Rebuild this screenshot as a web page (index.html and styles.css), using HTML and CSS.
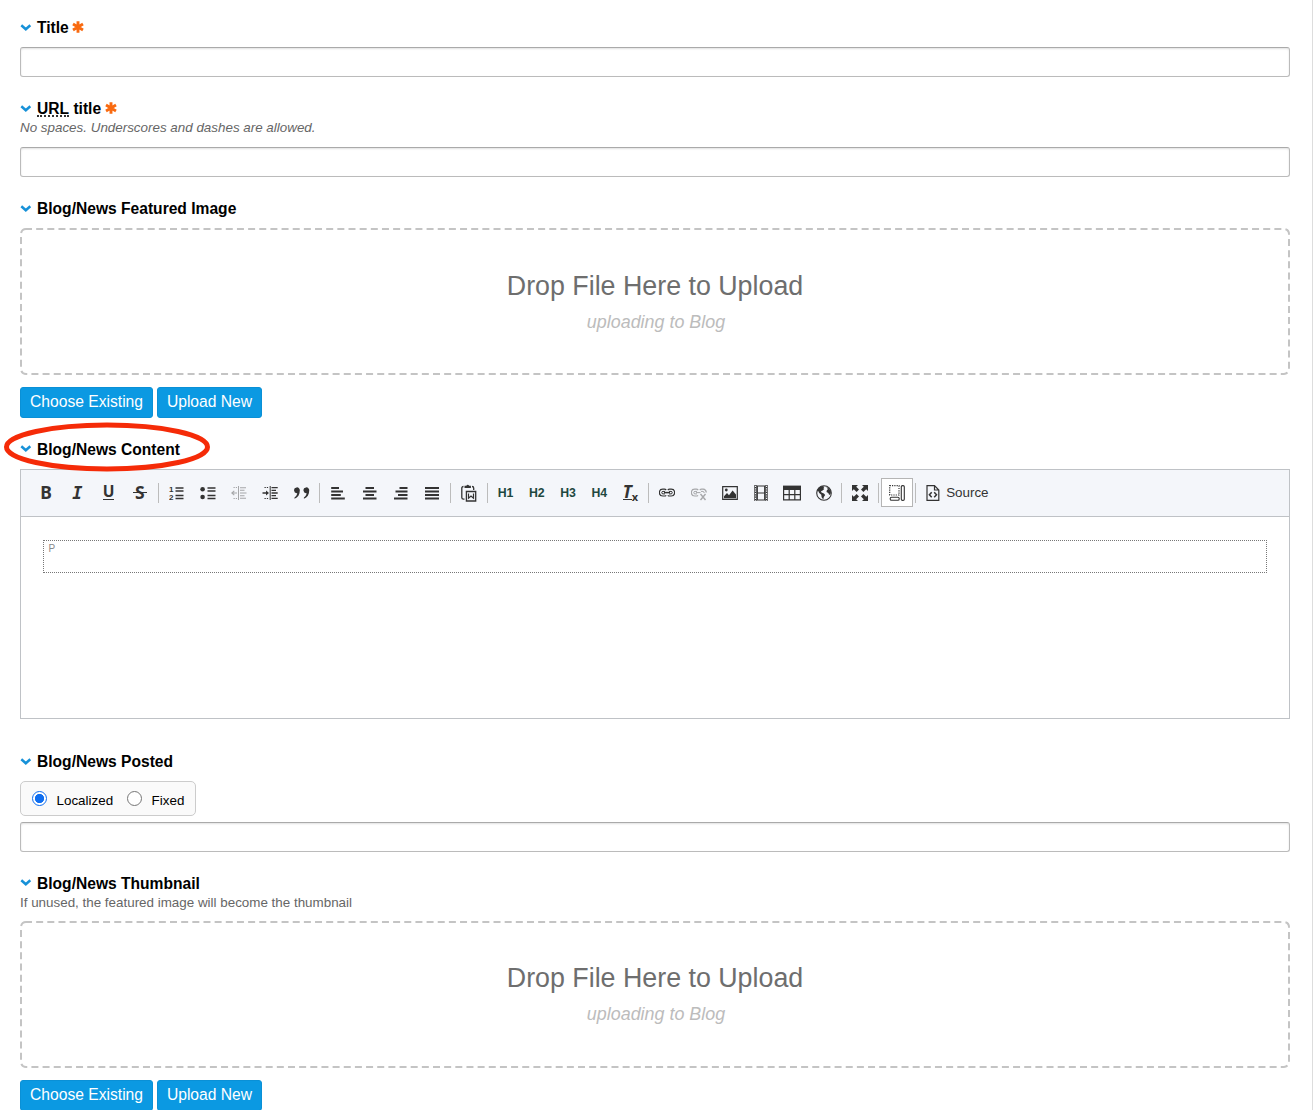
FILE: index.html
```
<!DOCTYPE html>
<html lang="en">

<head>
    <meta charset="UTF-8">
    <title>Publish</title>
    <link rel="stylesheet" href="styles.css">
</head>

<body>
    <!-- shared symbols -->
    <svg class="defs" width="0" height="0">
        <symbol id="chevron" viewBox="0 0 12 8">
            <path d="M1.3 1.3L5.8 5.3L10.3 1.3" fill="none" stroke="#1791d8" stroke-width="2.5" />
        </symbol>
        <symbol id="required" viewBox="0 0 12 12">
            <path d="M6 .3V11.7M1 3.1L11 8.9M11 3.1L1 8.9" fill="none" stroke="#f96a10" stroke-width="2.9" />
        </symbol>
    </svg>

    <form class="publish">
        <div class="field">
            <div class="label"><svg class="chevron"><use href="#chevron" /></svg>Title<svg class="required"><use href="#required" /></svg></div>
            <input class="text" type="text">
        </div>

        <div class="field">
            <div class="label"><svg class="chevron"><use href="#chevron" /></svg><span class="abbr">URL</span>&nbsp;title<svg class="required"><use href="#required" /></svg></div>
            <div class="note italic">No spaces. Underscores and dashes are allowed.</div>
            <input class="text" type="text">
        </div>

        <div class="field file">
            <div class="label"><svg class="chevron"><use href="#chevron" /></svg>Blog/News Featured Image</div>
            <div class="drop">
                <svg class="dashes"><rect x="1" y="1" width="1268" height="145" rx="5" /></svg>
                <p class="drop-title">Drop File Here to Upload</p>
                <p class="drop-dir">uploading to Blog</p>
            </div>
            <div class="buttons">
                <button type="button" class="btn choose">Choose Existing</button>
                <button type="button" class="btn upload">Upload New</button>
            </div>
        </div>

        <div class="field content">
            <div class="label"><svg class="chevron"><use href="#chevron" /></svg>Blog/News Content
                <svg class="marker" viewBox="0 0 208 50"><ellipse cx="104" cy="25" rx="100.5" ry="22" /></svg>
            </div>
            <div class="editor">
                <div class="toolbar">
                    <span class="tool bold">B</span>
                    <span class="tool ital">I</span>
                    <span class="tool under"><span>U</span></span>
                    <span class="tool strike"><span>S</span></span>
                    <span class="sep"></span>
                    <span class="tool"><svg viewBox="0 0 16 16">
                        <path d="M6.5 3H14.5M6.5 6H14.5M6.5 10.5H14.5M6.5 13.5H14.5" stroke-width="1.3" />
                        <text class="num" x="0" y="7">1</text>
                        <text class="num" x="0" y="15">2</text>
                    </svg></span>
                    <span class="tool"><svg viewBox="0 0 16 16">
                        <path d="M7.5 3H15.5M7.5 6H15.5M7.5 10.5H15.5M7.5 13.5H15.5" stroke-width="1.4" />
                        <circle class="solid" cx="2.6" cy="4.3" r="2.3" /><circle class="solid" cx="2.6" cy="12" r="2.3" />
                    </svg></span>
                    <span class="tool off"><svg viewBox="0 0 16 16">
                        <path d="M7.5 1V15" stroke-width="1" />
                        <path d="M2.5 2.5H6M2.5 13.5H6" stroke-width="1" stroke-dasharray="1.3 1" />
                        <path d="M9 2.7H15M9 5.3H13.5M9 8H15.5M9 10.7H13.5M9 13.3H15M.8 8H6M3.3 5.8L.8 8L3.3 10.2" stroke-width="1.1" />
                    </svg></span>
                    <span class="tool"><svg viewBox="0 0 16 16">
                        <path d="M8.2 1V15" stroke-width="1" />
                        <path d="M2.5 2.5H7M2.5 13.5H7" stroke-width="1" stroke-dasharray="1.3 1" />
                        <path d="M9.5 2.7H15.7M9.5 5.3H14M9.5 8H15.7M9.5 10.7H14M9.5 13.3H15.7M.5 8H5" stroke-width="1.3" />
                        <path class="solid" d="M4 5.5L7 8L4 10.5Z" />
                    </svg></span>
                    <span class="tool"><svg viewBox="0 0 16 16">
                        <path class="solid" d="M2.6 2.4A2.8 2.8 0 0 1 5.8 5.5C5.8 9.7 4 12.4 .5 13.7V12.5C2.2 11.5 3.1 10 3.2 8.1A2.8 2.8 0 1 1 2.6 2.4ZM12 2.4A2.8 2.8 0 0 1 15.2 5.5C15.2 9.7 13.4 12.4 9.9 13.7V12.5C11.6 11.5 12.5 10 12.6 8.1A2.8 2.8 0 1 1 12 2.4Z" />
                    </svg></span>
                    <span class="sep"></span>
                    <span class="tool"><svg viewBox="0 0 16 16"><path d="M1.2 3H9M1.2 6.5H13M1.2 10H10.8M1.2 13.5H14.8" stroke-width="2" /></svg></span>
                    <span class="tool"><svg viewBox="0 0 16 16"><path d="M3.5 3H12M1 6.5H14.5M3.5 10H12M1 13.5H14.5" stroke-width="2" /></svg></span>
                    <span class="tool"><svg viewBox="0 0 16 16"><path d="M6.5 3H14.5M2.5 6.5H14.5M5 10H14.5M1 13.5H14.5" stroke-width="2" /></svg></span>
                    <span class="tool"><svg viewBox="0 0 16 16"><path d="M1 3H15M1 6.5H15M1 10H15M1 13.5H15" stroke-width="2" /></svg></span>
                    <span class="sep"></span>
                    <span class="tool paste"><svg viewBox="0 0 16 18">
                        <path d="M3 2.5Q1.3 2.5 1.3 4V13.5Q1.3 15.2 3 15.2H4M11.5 2.5Q13.2 2.5 13.2 4V6" stroke-width="1.3" />
                        <path class="solid" d="M4 1.8H5.8Q7.2-.3 8.7 1.8H10.4V4H4Z" />
                        <path d="M5.9 7.5H15.2V17H5.9Z" stroke-width="1.3" />
                        <path d="M8 9.5V14.2L10.5 12L13 14.2V9.5" stroke-width="1.2" />
                    </svg></span>
                    <span class="sep"></span>
                    <span class="tool head">H1</span>
                    <span class="tool head">H2</span>
                    <span class="tool head">H3</span>
                    <span class="tool head">H4</span>
                    <span class="tool clear"><span>T</span><sub>x</sub></span>
                    <span class="sep"></span>
                    <span class="tool"><svg viewBox="0 0 16 16">
                        <path d="M7.2 10.3Q6.5 11 5.4 11H3.8A3.2 3.2 0 0 1 3.8 4.2H5.4Q6.5 4.2 7.2 5M8.8 5Q9.5 4.2 10.6 4.2H12.2A3.2 3.2 0 0 1 12.2 11H10.6Q9.5 11 8.8 10.3" stroke-width="1.2" />
                        <path d="M6 8.9H4A1.2 1.2 0 0 1 4 6.4H6M10 6.4H12A1.2 1.2 0 0 1 12 8.9H10" stroke-width="1" />
                        <path d="M5 7.6H11" stroke-width="1.5" />
                    </svg></span>
                    <span class="tool off"><svg viewBox="0 0 16 16">
                        <path d="M7 10.3Q6.3 11 5.2 11H3.8A3.2 3.2 0 0 1 3.8 4.2H5.4Q6.5 4.2 7.2 5M8.8 5Q9.5 4.2 10.6 4.2H12.2Q15 4.5 15.3 7.5" stroke-width="1.2" />
                        <path d="M6 8.9H4A1.2 1.2 0 0 1 4 6.4H6M10 6.4H12Q13 6.4 13.2 8M5 7.6H9.5" stroke-width="1" />
                        <path d="M9.5 9L14.5 15M14.5 9L9.5 15" stroke-width="1.4" />
                    </svg></span>
                    <span class="tool"><svg viewBox="0 0 16 16">
                        <path d="M.7 1.7H15.3V14.3H.7Z" stroke-width="1.2" />
                        <path class="solid" d="M2 13.2V11.2L5 8L7 10.2L10.6 5.6L14 9.4V13.2Z" /><circle class="solid" cx="4.3" cy="5" r="1.4" />
                    </svg></span>
                    <span class="tool"><svg viewBox="0 0 16 16">
                        <path d="M2.5 0V16M13.5 0V16" stroke-width="2.4" />
                        <path class="holes" d="M2.5 .8V16M13.5 .8V16" />
                        <path d="M4.3 .6V15.4M11.7 .6V15.4M4 1H12M4 8H12M4 15H12" stroke-width="1.2" />
                    </svg></span>
                    <span class="tool table"><svg viewBox="0 0 18 16">
                        <path d="M.6 1V14.9H17.4V1M6.2 4V15M11.8 4V15M.6 9.7H17.4" stroke-width="1.2" />
                        <path class="solid" d="M0 .6H18V5H0Z" />
                    </svg></span>
                    <span class="tool"><svg viewBox="0 0 16 16">
                        <circle cx="8" cy="8" r="7.3" stroke-width="1.1" />
                        <path class="solid" d="M1.2 5.5Q2.8 1.6 6.5 1L8.4 1.8L7.4 3.2L8.3 4L6.6 5.6L5 6.2L5.5 7.6L7.9 8.5L9.2 10L7.8 12L7.3 14.5L5.6 12.3L5.3 9.8L3.2 8L2.2 5.9ZM10.2 1.7L13.2 3.5L15 6.7L14.6 9L13.2 10L12.3 8L10.5 7L10.9 5L12 4.3Z" />
                    </svg></span>
                    <span class="sep"></span>
                    <span class="tool"><svg viewBox="0 0 16 16">
                        <path class="solid" d="M0 0H6L4.2 1.8L7 4.6L4.6 7L1.8 4.2L0 6ZM16 0V6L14.2 4.2L11.4 7L9 4.6L11.8 1.8L10 0ZM0 16V10L1.8 11.8L4.6 9L7 11.4L4.2 14.2L6 16ZM16 16H10L11.8 14.2L9 11.4L11.4 9L14.2 11.8L16 10Z" />
                    </svg></span>
                    <span class="sep"></span>
                    <span class="tool active"><svg viewBox="0 0 16 16">
                        <path d="M.7 .7H10V10H.7Z" stroke-width="1.2" stroke-dasharray="1.2 1.1" />
                        <rect x="12.3" y=".6" width="3" height="14.8" rx="1.2" stroke-width="1.1" />
                        <rect x="1.2" y="12.3" width="9" height="3" rx="1.3" stroke-width="1.1" />
                    </svg></span>
                    <span class="sep"></span>
                    <span class="source"><svg viewBox="0 0 14 16">
                        <path d="M1 .7H8.5L12.8 5V15.3H1ZM8.5 .7V5H12.8" stroke-width="1.2" />
                        <path d="M5.7 7.2L3.4 9.7L5.7 12.2M8.2 7.2L10.5 9.7L8.2 12.2" stroke-width="1.5" />
                    </svg>Source</span>
                </div>
                <div class="body">
                    <div class="block">P</div>
                </div>
            </div>
        </div>

        <div class="field posted">
            <div class="label"><svg class="chevron"><use href="#chevron" /></svg>Blog/News Posted</div>
            <div class="zone">
                <span class="radio on"></span><span class="radio-text">Localized</span>
                <span class="radio"></span><span class="radio-text">Fixed</span>
            </div>
            <input class="text" type="text">
        </div>

        <div class="field file">
            <div class="label"><svg class="chevron"><use href="#chevron" /></svg>Blog/News Thumbnail</div>
            <div class="note">If unused, the featured image will become the thumbnail</div>
            <div class="drop">
                <svg class="dashes"><rect x="1" y="1" width="1268" height="145" rx="5" /></svg>
                <p class="drop-title">Drop File Here to Upload</p>
                <p class="drop-dir">uploading to Blog</p>
            </div>
            <div class="buttons">
                <button type="button" class="btn choose">Choose Existing</button>
                <button type="button" class="btn upload">Upload New</button>
            </div>
        </div>
    </form>
</body>

</html>
```
FILE: styles.css
```
* {
    box-sizing: border-box;
    margin: 0;
    padding: 0;
}

body {
    height: 1110px;
    overflow: hidden;
    background: #fff;
    color: #000;
    font-family: "Liberation Sans", Arial, sans-serif;
}

.defs {
    position: absolute;
}

.publish {
    height: 1110px;
    overflow: hidden;
    padding: 18px 22px 0 20px;
    border-right: 1px solid #ddd;
}

.field {
    display: flex;
    flex-direction: column;
    margin-bottom: 22px;
}

.label {
    position: relative;
    display: flex;
    align-items: center;
    height: 19px;
    font-size: 15.6px;
    font-weight: bold;
    line-height: 19px;
    white-space: nowrap;
}

.chevron {
    width: 12px;
    height: 8px;
    margin-right: 5px;
}

.required {
    width: 12px;
    height: 12px;
    margin: 0 0 1px 3.5px;
}

.abbr {
    height: 17px;
    line-height: 17px;
    border-bottom: 2px dotted #333;
}

.note {
    height: 19px;
    color: #666;
    font-size: 13.4px;
    line-height: 19px;
}

.italic {
    font-style: italic;
}

.text {
    width: 1270px;
    height: 30px;
    margin-top: 10px;
    border: 1px solid #bbb;
    border-top-color: #aaa;
    border-radius: 3px;
    box-shadow: inset 0 1px 2px rgba(0, 0, 0, 0.12);
}

/* file drop zones */
.drop {
    position: relative;
    height: 147px;
    margin-top: 10.4px;
    padding-top: 40.5px;
    text-align: center;
}

.note + .drop {
    margin-top: 9.2px;
}

.dashes {
    position: absolute;
    top: 0;
    left: 0;
    width: 1270px;
    height: 147px;
}

.dashes rect {
    fill: none;
    stroke: #c4c4c4;
    stroke-width: 2;
    stroke-dasharray: 7 4.155;
    stroke-dashoffset: 1;
}

.drop-title {
    color: #6e6e6e;
    font-size: 26.8px;
    line-height: 34px;
}

.drop-dir {
    margin-top: 8px;
    padding-left: 2px;
    color: #bcbcbc;
    font-size: 17.9px;
    font-style: italic;
    line-height: 22px;
}

.buttons {
    display: flex;
    gap: 4px;
    margin-top: 11.6px;
}

.btn {
    height: 31px;
    background: #0b99e2;
    border: 1px solid #0a90d6;
    border-radius: 3px;
    color: #fff;
    font-family: inherit;
    font-size: 15.65px;
    text-align: center;
    white-space: nowrap;
}

.choose {
    width: 133px;
}

.upload {
    width: 105px;
}

/* hand drawn ring around the field name */
.marker {
    position: absolute;
    left: -17px;
    top: -17.5px;
    width: 208px;
    height: 50px;
    fill: none;
    stroke: #f52b08;
    stroke-width: 5;
    z-index: 1;
}

.content {
    margin-bottom: 33px;
}

.editor {
    height: 250px;
    margin-top: 10.3px;
    border: 1px solid #bfc2c6;
}

.toolbar {
    display: flex;
    align-items: center;
    height: 47px;
    padding: 0 0 1px 9.4px;
    background: #f4f6fa;
    border-bottom: 1px solid #bfc2c6;
    color: #333;
}

.tool {
    display: flex;
    flex: none;
    align-items: center;
    justify-content: center;
    width: 31.25px;
    height: 29px;
}

.tool svg,
.source svg {
    width: 16px;
    height: 16px;
    fill: none;
    stroke: #333;
}

.tool .solid {
    fill: #333;
    stroke: none;
}

.tool .num {
    fill: #333;
    stroke: none;
    font-size: 8px;
    font-weight: bold;
}

.tool .holes {
    stroke: #f4f6fa;
    stroke-width: 1.1;
    stroke-dasharray: 1.2 1.2;
}

.tool.table svg {
    width: 18px;
}

.tool.paste svg {
    width: 17px;
    height: 18px;
}

.off {
    opacity: 0.4;
}

.sep {
    flex: none;
    width: 1px;
    height: 20px;
    margin: 0 2.25px;
    background: #bcbcbc;
}

.bold,
.under,
.strike {
    font-family: "Noto Sans", sans-serif;
    font-size: 17.5px;
    font-weight: bold;
    line-height: 24px;
}

.bold,
.strike {
    padding-bottom: 1px;
}

.ital {
    font-family: "DejaVu Sans Mono", monospace;
    font-size: 17px;
    font-style: italic;
    font-weight: bold;
}

.under span {
    height: 15px;
    font-size: 15.5px;
    line-height: 13px;
    border-bottom: 1px solid #333;
}

.strike span {
    position: relative;
}

.strike span::after {
    content: "";
    position: absolute;
    top: 12px;
    left: -2px;
    right: -2px;
    height: 1px;
    background: #333;
}

.head {
    color: #1e483f;
    font-size: 12.3px;
    font-weight: bold;
}

.clear {
    font-family: "Noto Sans", sans-serif;
    font-weight: bold;
}

.clear span {
    height: 15px;
    font-size: 17px;
    font-style: italic;
    line-height: 13px;
    border-bottom: 1px solid #333;
}

.clear sub {
    margin-top: 9px;
    font-size: 11px;
    line-height: 10px;
}

.active {
    background: #fff;
    border: 1px solid #b5b5b5;
}

.source {
    display: flex;
    align-items: center;
    margin-left: 8px;
    font-size: 13.4px;
}

.source svg {
    width: 14px;
    margin-right: 6px;
}

.body {
    padding: 22.4px;
}

.block {
    height: 33px;
    padding: 2px 4px;
    border: 1px dotted #777;
    color: #888;
    font-size: 10px;
    line-height: 11px;
}

/* date field */
.zone {
    display: flex;
    align-items: center;
    width: 176px;
    height: 35px;
    margin-top: 10px;
    padding-left: 11px;
    background: #fafafa;
    border: 1px solid #ccc;
    border-radius: 5px;
    font-size: 13.4px;
}

.zone + .text {
    margin-top: 5.5px;
}

.radio {
    flex: none;
    width: 15px;
    height: 15px;
    margin-bottom: 1px;
    border: 1px solid #767676;
    border-radius: 50%;
    background: #fff;
}

.radio.on {
    border-color: #0f6ef0;
    background: radial-gradient(circle, #0f6ef0 4.3px, #fff 5px);
}

.radio-text {
    flex: none;
    margin: 4px 14px 0 9.5px;
}
```
